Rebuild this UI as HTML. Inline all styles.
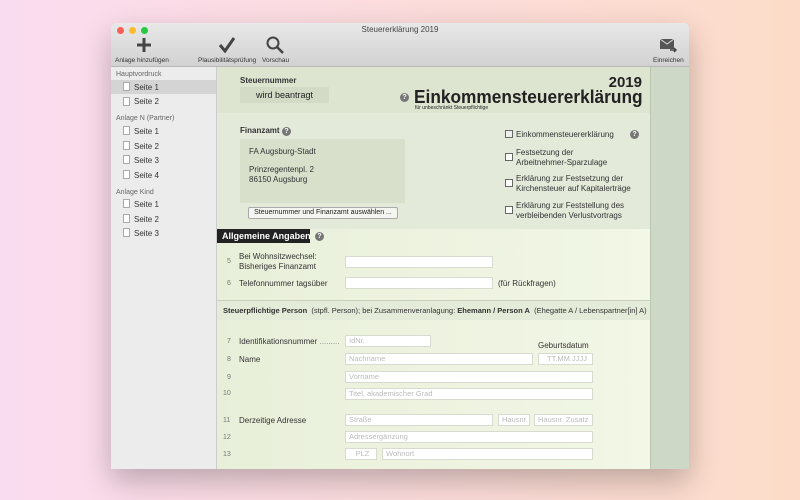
<!DOCTYPE html>
<html><head><meta charset="utf-8"><style>
*{margin:0;padding:0;box-sizing:border-box}
body{width:800px;height:500px;overflow:hidden;background:linear-gradient(90deg,#fadcf0,#fcdcd8 60%,#fcdcc8);font-family:"Liberation Sans",sans-serif;position:relative;color:#222}
.a{position:absolute;white-space:nowrap}
.win{position:absolute;left:111px;top:23px;width:578px;height:446px;background:#ececec;box-shadow:0 12px 30px rgba(0,0,0,.25);border-radius:5px 5px 0 0;overflow:hidden}
.tb{position:absolute;left:0;top:0;width:578px;height:44px;background:linear-gradient(#e8e8e8,#d2d2d2);border-bottom:1px solid #b8b8b8}
.side{position:absolute;left:0;top:44px;width:106px;height:402px;background:#ececec;border-right:1px solid #ccc;font-size:8px}
.side .h{position:absolute;left:5px;color:#666;font-size:7px}
.side .i{position:absolute;left:23px;color:#333}
.side .d{position:absolute;left:12px;width:7px;height:9px;border:1px solid #aaa;background:#fff}
.main{position:absolute;left:106px;top:44px;width:433px;height:402px;background:linear-gradient(90deg,#e8efd9,#f2f7e6);overflow:hidden}
.strip{position:absolute;left:539px;top:44px;width:39px;height:402px;background:#cdd8c6;border-left:1px solid #bbc6b0}
.q{position:absolute;width:9px;height:9px;border-radius:50%;background:#777;color:#fff;font-size:7px;text-align:center;line-height:9px;font-weight:bold}
.in{position:absolute;height:12px;background:#fff;border:1px solid #d8dcd0;font-size:7.5px;color:#bbb;padding-left:3px;line-height:10px}
.n{position:absolute;font-size:7px;color:#777}
.l{position:absolute;font-size:8px;color:#333;white-space:nowrap}
.cb{position:absolute;width:8px;height:8px;border:1px solid #666;background:#fff}
</style></head><body>
<div class="win">
<div class="tb">
<div class="a" style="left:6px;top:4px;width:7px;height:7px;border-radius:50%;background:#fc5f57"></div>
<div class="a" style="left:18px;top:4px;width:7px;height:7px;border-radius:50%;background:#fdbc2e"></div>
<div class="a" style="left:30px;top:4px;width:7px;height:7px;border-radius:50%;background:#28c840"></div>
<div class="a" style="left:0;width:578px;text-align:center;top:2px;font-size:8px;color:#444">Steuererklärung 2019</div>
<svg class="a" style="left:25px;top:14px" width="16" height="16"><path d="M8 1v14M1 8h14" stroke="#444" stroke-width="3"/></svg>
<div class="a" style="left:4px;top:34px;font-size:6.5px;color:#333">Anlage hinzufügen</div>
<svg class="a" style="left:107px;top:14px" width="18" height="16"><path d="M2 8l5 6L16 1" stroke="#444" stroke-width="3" fill="none"/></svg>
<div class="a" style="left:87px;top:34px;font-size:6.5px;color:#333">Plausibilitätsprüfung</div>
<svg class="a" style="left:155px;top:13px" width="18" height="18"><circle cx="7" cy="7" r="5.5" stroke="#444" stroke-width="2" fill="none"/><path d="M11 11l6 6" stroke="#444" stroke-width="2.5"/></svg>
<div class="a" style="left:151px;top:34px;font-size:6.5px;color:#333">Vorschau</div>
<svg class="a" style="left:548px;top:15px" width="18" height="15"><rect x="1" y="1" width="14" height="10" fill="#555"/><path d="M1 1l7 5 7-5" stroke="#ddd" fill="none"/><path d="M11 12h6M15 10l2 2-2 2" stroke="#444" stroke-width="1.5" fill="none"/></svg>
<div class="a" style="left:542px;top:34px;font-size:6.5px;color:#333">Einreichen</div>
</div>
<div class="side">
<div class="h" style="top:4px">Hauptvordruck</div>
<div class="a" style="left:0;top:13px;width:105px;height:14px;background:#d4d4d4"></div>
<div class="d" style="top:15px"></div><div class="i" style="top:16px">Seite 1</div>
<div class="d" style="top:30px"></div><div class="i" style="top:30px">Seite 2</div>
<div class="h" style="top:48px">Anlage N (Partner)</div>
<div class="d" style="top:59px"></div><div class="i" style="top:60px">Seite 1</div>
<div class="d" style="top:74px"></div><div class="i" style="top:75px">Seite 2</div>
<div class="d" style="top:88px"></div><div class="i" style="top:89px">Seite 3</div>
<div class="d" style="top:103px"></div><div class="i" style="top:104px">Seite 4</div>
<div class="h" style="top:122px">Anlage Kind</div>
<div class="d" style="top:132px"></div><div class="i" style="top:133px">Seite 1</div>
<div class="d" style="top:147px"></div><div class="i" style="top:148px">Seite 2</div>
<div class="d" style="top:161px"></div><div class="i" style="top:162px">Seite 3</div>
</div>
<div class="main">
<div class="a" style="left:0;top:0;width:433px;height:46px;background:#dde5d0"></div>
<div class="a" style="left:0;top:46px;width:433px;height:116px;background:#e3eada"></div>
<div class="l" style="left:23px;top:9px;font-weight:bold">Steuernummer</div>
<div class="a" style="left:23px;top:20px;width:89px;height:16px;background:#d3dbc6;font-size:9px;text-align:center;line-height:16px">wird beantragt</div>
<div class="q" style="left:183px;top:26px">?</div>
<div class="a" style="right:8px;top:7px;font-size:15px;font-weight:bold">2019</div>
<div class="a" style="left:197px;top:20px;width:228px;font-size:18px;font-weight:bold;transform:scaleX(0.96);transform-origin:left top">Einkommensteuererklärung</div>
<div class="a" style="left:198px;top:38px;font-size:5px">für unbeschränkt Steuerpflichtige</div>
<div class="l" style="left:23px;top:59px;font-weight:bold">Finanzamt</div>
<div class="q" style="left:65px;top:60px">?</div>
<div class="a" style="left:23px;top:72px;width:165px;height:64px;background:#d8e0cc"></div>
<div class="l" style="left:32px;top:80px">FA Augsburg-Stadt</div>
<div class="l" style="left:32px;top:98px">Prinzregentenpl. 2</div>
<div class="l" style="left:32px;top:108px">86150 Augsburg</div>
<div class="a" style="left:31px;top:140px;width:150px;height:12px;background:#f4f4f0;border:1px solid #aaa;border-radius:2px;font-size:7px;text-align:center;line-height:10px">Steuernummer und Finanzamt auswählen ...</div>
<div class="cb" style="left:288px;top:63px;background:#eee"></div>
<div class="l" style="left:299px;top:63px">Einkommensteuererklärung</div>
<div class="q" style="left:413px;top:63px">?</div>
<div class="cb" style="left:288px;top:86px"></div>
<div class="l" style="left:299px;top:81px;line-height:10px">Festsetzung der<br>Arbeitnehmer-Sparzulage</div>
<div class="cb" style="left:288px;top:112px"></div>
<div class="l" style="left:299px;top:107px;line-height:10px">Erklärung zur Festsetzung der<br>Kirchensteuer auf Kapitalerträge</div>
<div class="cb" style="left:288px;top:139px"></div>
<div class="l" style="left:299px;top:134px;line-height:10px">Erklärung zur Feststellung des<br>verbleibenden Verlustvortrags</div>
<div class="a" style="left:0;top:162px;width:93px;height:14px;background:#222;color:#fff;font-size:9px;font-weight:bold;line-height:14px;padding-left:5px">Allgemeine Angaben</div>
<div class="q" style="left:98px;top:165px">?</div>
<div class="n" style="left:10px;top:191px">5</div>
<div class="l" style="left:22px;top:185px;line-height:10px">Bei Wohnsitzwechsel:<br>Bisheriges Finanzamt</div>
<div class="in" style="left:128px;top:189px;width:148px"></div>
<div class="n" style="left:10px;top:213px">6</div>
<div class="l" style="left:22px;top:212px">Telefonnummer tagsüber</div>
<div class="in" style="left:128px;top:210px;width:148px"></div>
<div class="l" style="left:281px;top:212px">(für Rückfragen)</div>
<div class="a" style="left:0;top:233px;width:433px;height:20px;background:#e4ebd8;border-top:1px solid #c8d0bc;font-size:7.5px;line-height:20px;padding-left:6px;color:#333"><b>Steuerpflichtige Person</b> &nbsp;(stpfl. Person); bei Zusammenveranlagung: <b>Ehemann / Person A</b> &nbsp;(Ehegatte A / Lebenspartner[in] A)</div>
<div class="n" style="left:10px;top:271px">7</div>
<div class="l" style="left:22px;top:270px">Identifikationsnummer <span style="color:#888">.........</span></div>
<div class="in" style="left:128px;top:268px;width:86px">IdNr.</div>
<div class="l" style="left:321px;top:274px">Geburtsdatum</div>
<div class="n" style="left:10px;top:289px">8</div>
<div class="l" style="left:22px;top:288px">Name</div>
<div class="in" style="left:128px;top:286px;width:188px">Nachname</div>
<div class="in" style="left:321px;top:286px;width:55px;text-align:center">TT.MM.JJJJ</div>
<div class="n" style="left:10px;top:307px">9</div>
<div class="in" style="left:128px;top:304px;width:248px">Vorname</div>
<div class="n" style="left:6px;top:323px">10</div>
<div class="in" style="left:128px;top:321px;width:248px">Titel, akademischer Grad</div>
<div class="n" style="left:6px;top:350px">11</div>
<div class="l" style="left:22px;top:349px">Derzeitige Adresse</div>
<div class="in" style="left:128px;top:347px;width:148px">Straße</div>
<div class="in" style="left:281px;top:347px;width:32px">Hausnr.</div>
<div class="in" style="left:317px;top:347px;width:59px">Hausnr. Zusatz</div>
<div class="n" style="left:6px;top:367px">12</div>
<div class="in" style="left:128px;top:364px;width:248px">Adressergänzung</div>
<div class="n" style="left:6px;top:384px">13</div>
<div class="in" style="left:128px;top:381px;width:32px;text-align:center">PLZ</div>
<div class="in" style="left:165px;top:381px;width:211px">Wohnort</div>
</div>
<div class="strip"></div>
</div>
</body></html>
